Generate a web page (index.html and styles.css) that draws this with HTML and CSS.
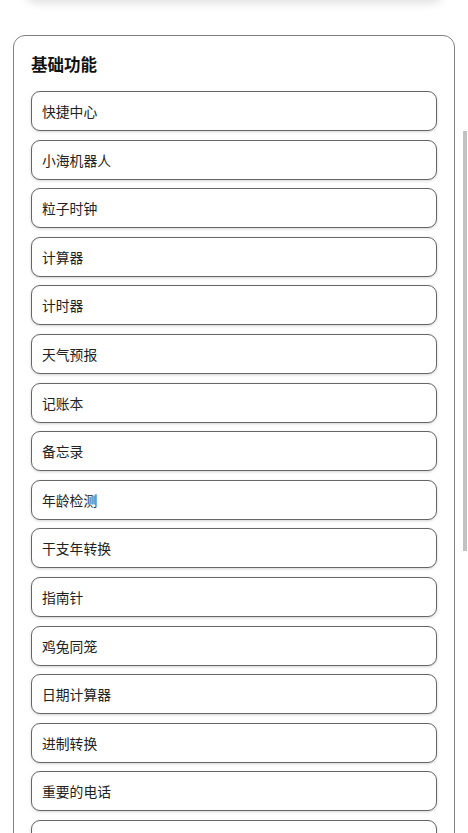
FILE: index.html
```html
<!DOCTYPE html>
<html lang="zh-CN">
<head>
<meta charset="utf-8">
<title>基础功能</title>
<link rel="stylesheet" href="styles.css">
</head>
<body>
<div class="page">
  <div class="prev-card"></div>
  <section class="card">
    <h2 class="card-title">基础功能</h2>
    <ul class="list">
      <li class="item">快捷中心</li>
      <li class="item">小海机器人</li>
      <li class="item">粒子时钟</li>
      <li class="item">计算器</li>
      <li class="item">计时器</li>
      <li class="item">天气预报</li>
      <li class="item">记账本</li>
      <li class="item">备忘录</li>
      <li class="item">年龄检测</li>
      <li class="item">干支年转换</li>
      <li class="item">指南针</li>
      <li class="item">鸡兔同笼</li>
      <li class="item">日期计算器</li>
      <li class="item">进制转换</li>
      <li class="item">重要的电话</li>
      <li class="item">单位换算</li>
      <li class="item">随机数</li>
    </ul>
  </section>
</div>
<div class="scroll-thumb"></div>
</body>
</html>
```

FILE: styles.css
```css
html, body {
  margin: 0;
  padding: 0;
  background: #ffffff;
  overflow: hidden;
  height: 833px;
}
body {
  font-family: "Noto Sans CJK SC", "Noto Sans", sans-serif;
  color: #1f1f1f;
}
.page {
  display: flex;
  flex-direction: column;
}
.prev-card {
  height: 40px;
  margin: -40px 25px 0;
  background: #fff;
  border-radius: 12px;
  box-shadow: 0 3px 10px rgba(0, 0, 0, 0.13);
}
.card {
  margin: 35px 13px 0;
  border: 1px solid #808080;
  border-radius: 12px;
  padding: 14px 17px 20px;
  background: #fff;
}
.card-title {
  margin: 0 0 13px;
  font-size: 16.5px;
  font-weight: 700;
  line-height: 28px;
  color: #111;
}
.list {
  list-style: none;
  margin: 0;
  padding: 0;
  display: flex;
  flex-direction: column;
  gap: 8.6px;
}
.item {
  box-sizing: border-box;
  height: 40px;
  display: flex;
  align-items: center;
  padding: 0 10px;
  border: 1px solid #666;
  border-radius: 9px;
  box-shadow: 0 1px 3px rgba(0, 0, 0, 0.18);
  font-size: 13.8px;
  color: #222;
  background: #fff;
}
.scroll-thumb {
  position: absolute;
  left: 463px;
  top: 131px;
  width: 4px;
  height: 420px;
  background: #c2c2c2;
}
```
